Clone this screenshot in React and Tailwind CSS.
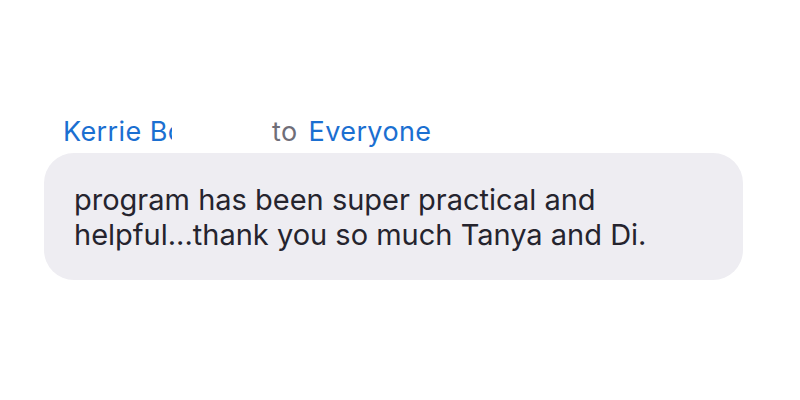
export default function App() {
  return (
    <div className="w-[800px] h-[400px] bg-white pt-[113px] pl-[44px] font-['Inter',sans-serif]">
      <div className="flex items-center pl-[19px] h-[36px] text-[27px] leading-none tracking-[0.4px]">
        <div className="w-[109px] overflow-hidden whitespace-nowrap text-[#1b6fd1]">Kerrie Bo</div>
        <div className="w-[100px]" />
        <span className="text-[#6f6e78]">to</span>
        <span className="ml-[11px] text-[#1b6fd1]">Everyone</span>
      </div>
      <div className="mt-[4px] w-[699px] h-[127px] rounded-[30px] bg-[#eeedf2] pl-[30px] pt-[29px] text-[29px] leading-[35px] text-[#25242e]">
        <p>program has been super practical and</p>
        <p>helpful...thank you so much Tanya and Di.</p>
      </div>
    </div>
  )
}
